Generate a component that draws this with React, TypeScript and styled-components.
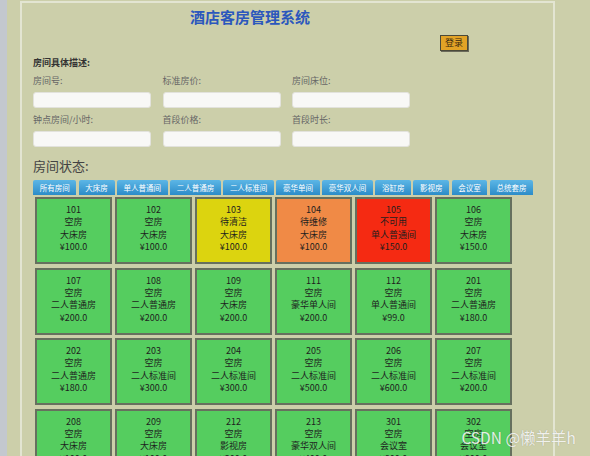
import styled, { createGlobalStyle } from "styled-components";

const GlobalStyle = createGlobalStyle`
  html, body {
    margin: 0;
    padding: 0;
    height: 456px;
    overflow: hidden;
  }
  body {
    background: #c3c8cf;
    font-family: "Noto Sans CJK SC", "Noto Sans", sans-serif;
  }
`

const Page = styled.div`
  position: relative;
  box-sizing: border-box;
  height: 456px;
  margin-left: 7px;
  padding: 1px 0 0 13px;
  background: #cccfaa;
`

const Panel = styled.main`
  box-sizing: border-box;
  width: 535px;
  height: 100%;
  border: 2px solid #e3e5d2;
  border-bottom: none;
  padding: 5px 0 0 11px;
`

const Title = styled.h1`
  margin: 0 0 0 157px;
  font-size: 15px;
  line-height: 18px;
  font-weight: 700;
  color: #2b57bd;
`

const LoginRow = styled.div`
  display: flex;
  margin-top: 9px;
  padding-left: 407px;
`

const LoginButton = styled.button`
  width: 28px;
  height: 16px;
  padding: 0;
  background: #e2a326;
  border: 1px solid #4a4a3a;
  box-shadow: 1px 1px 0 #6a6a5a;
  font-family: inherit;
  font-size: 9px;
  line-height: 14px;
  color: #3a2a10;
`

const SectionLabel = styled.div`
  margin-top: 6px;
  font-size: 9px;
  line-height: 12px;
  font-weight: 700;
  color: #333;
`

const Fields = styled.div`
  display: grid;
  grid-template-columns: repeat(3, 118px);
  column-gap: 11.5px;
  row-gap: 6px;
  margin-top: 6px;
`

const Field = styled.label`
  display: flex;
  flex-direction: column;
  gap: 5px;
  font-size: 9px;
  line-height: 12px;
  color: #666;
`

const Input = styled.input`
  box-sizing: border-box;
  width: 118px;
  height: 16px;
  margin: 0;
  background: #f8f8f6;
  border: 1px solid #e2e2dc;
  border-radius: 3px;
`

const StatusTitle = styled.h2`
  margin: 11px 0 0;
  font-size: 13px;
  line-height: 16px;
  font-weight: 400;
  color: #444;
`

const Tabs = styled.div`
  display: flex;
  gap: 2.3px;
  margin-top: 6px;
`

const Tab = styled.button`
  height: 15px;
  padding: 0 6.7px;
  border: none;
  border-radius: 2px 2px 0 0;
  background: linear-gradient(to bottom, #5cb6e6, #2c8cc8);
  font-family: inherit;
  font-size: 7.5px;
  line-height: 15px;
  color: #fff;
  white-space: nowrap;
`

const RoomScroll = styled.div`
  width: 507px;
  height: 300px;
  margin-top: 1px;
  overflow-y: scroll;

  &::-webkit-scrollbar {
    width: 11px;
  }
  &::-webkit-scrollbar-track {
    background: #fafafa;
  }
  &::-webkit-scrollbar-thumb {
    background: #c6c6c6;
    border: 2px solid #fafafa;
    border-top: none;
    border-bottom: none;
  }
  &::-webkit-scrollbar-button {
    display: none;
  }
  &::-webkit-scrollbar-button:single-button:vertical:decrement {
    display: block;
    height: 11px;
    background-color: #fafafa;
    background-image: linear-gradient(to top left, #8a8a8a 50%, transparent 50%),
      linear-gradient(to top right, #8a8a8a 50%, transparent 50%);
    background-size: 3px 3px, 3px 3px;
    background-position: 2.5px 4px, 5.5px 4px;
    background-repeat: no-repeat;
  }
`

const RoomGrid = styled.div`
  display: grid;
  grid-template-columns: repeat(6, 77px);
  column-gap: 3px;
  row-gap: 3.5px;
  padding: 1px 0 8px 2px;
`

type Status = "free" | "clean" | "repair" | "off";

const statusColor: Record<Status, string> = {
  free: "#55cd5f",
  clean: "#dcd40f",
  repair: "#f08a46",
  off: "#f52a12",
};

const statusText: Record<Status, string> = {
  free: "空房",
  clean: "待清洁",
  repair: "待维修",
  off: "不可用",
};

const RoomCell = styled.div<{ $status: Status }>`
  box-sizing: border-box;
  height: 67px;
  padding-top: 5px;
  border: 2px solid #66705e;
  background: ${(p) => statusColor[p.$status]};
  text-align: center;
  font-size: 9px;
  line-height: 12.4px;
  color: #1e1e1e;
`

const Watermark = styled.div`
  position: absolute;
  right: 14px;
  bottom: 9px;
  font-family: "Noto Sans CJK SC", "Noto Sans", sans-serif;
  font-size: 15.5px;
  line-height: 20px;
  color: rgba(255, 255, 255, 0.85);
  text-shadow: 0 0 1px rgba(80, 80, 80, 0.4);
  pointer-events: none;
`

const tabs = ["所有房间", "大床房", "单人普通间", "二人普通房", "二人标准间", "豪华单间", "豪华双人间", "浴缸房", "影视房", "会议室", "总统套房"];

const rooms: { no: string; status: Status; type: string; price: string }[] = [
  { no: "101", status: "free", type: "大床房", price: "100.0" },
  { no: "102", status: "free", type: "大床房", price: "100.0" },
  { no: "103", status: "clean", type: "大床房", price: "100.0" },
  { no: "104", status: "repair", type: "大床房", price: "100.0" },
  { no: "105", status: "off", type: "单人普通间", price: "150.0" },
  { no: "106", status: "free", type: "大床房", price: "150.0" },
  { no: "107", status: "free", type: "二人普通房", price: "200.0" },
  { no: "108", status: "free", type: "二人普通房", price: "200.0" },
  { no: "109", status: "free", type: "大床房", price: "200.0" },
  { no: "111", status: "free", type: "豪华单人间", price: "200.0" },
  { no: "112", status: "free", type: "单人普通间", price: "99.0" },
  { no: "201", status: "free", type: "二人普通房", price: "180.0" },
  { no: "202", status: "free", type: "二人普通房", price: "180.0" },
  { no: "203", status: "free", type: "二人标准间", price: "300.0" },
  { no: "204", status: "free", type: "二人标准间", price: "300.0" },
  { no: "205", status: "free", type: "二人标准间", price: "500.0" },
  { no: "206", status: "free", type: "二人标准间", price: "600.0" },
  { no: "207", status: "free", type: "二人标准间", price: "200.0" },
  { no: "208", status: "free", type: "大床房", price: "100.0" },
  { no: "209", status: "free", type: "大床房", price: "100.0" },
  { no: "212", status: "free", type: "影视房", price: "300.0" },
  { no: "213", status: "free", type: "豪华双人间", price: "400.0" },
  { no: "301", status: "free", type: "会议室", price: "800.0" },
  { no: "302", status: "free", type: "会议室", price: "800.0" },
];

const fields = ["房间号:", "标准房价:", "房间床位:", "钟点房间/小时:", "首段价格:", "首段时长:"];

export default function App() {
  return (
    <>
      <GlobalStyle />
      <Page>
        <Panel>
          <Title>酒店客房管理系统</Title>
          <LoginRow>
            <LoginButton>登录</LoginButton>
          </LoginRow>
          <SectionLabel>房间具体描述:</SectionLabel>
          <Fields>
            {fields.map((f) => (
              <Field key={f}>
                {f}
                <Input />
              </Field>
            ))}
          </Fields>
          <StatusTitle>房间状态:</StatusTitle>
          <Tabs>
            {tabs.map((t) => (
              <Tab key={t}>{t}</Tab>
            ))}
          </Tabs>
          <RoomScroll>
            <RoomGrid>
              {rooms.map((r) => (
                <RoomCell key={r.no} $status={r.status}>
                  <div>{r.no}</div>
                  <div>{statusText[r.status]}</div>
                  <div>{r.type}</div>
                  <div>¥{r.price}</div>
                </RoomCell>
              ))}
            </RoomGrid>
          </RoomScroll>
        </Panel>
        <Watermark>CSDN @懒羊羊h</Watermark>
      </Page>
    </>
  );
}
